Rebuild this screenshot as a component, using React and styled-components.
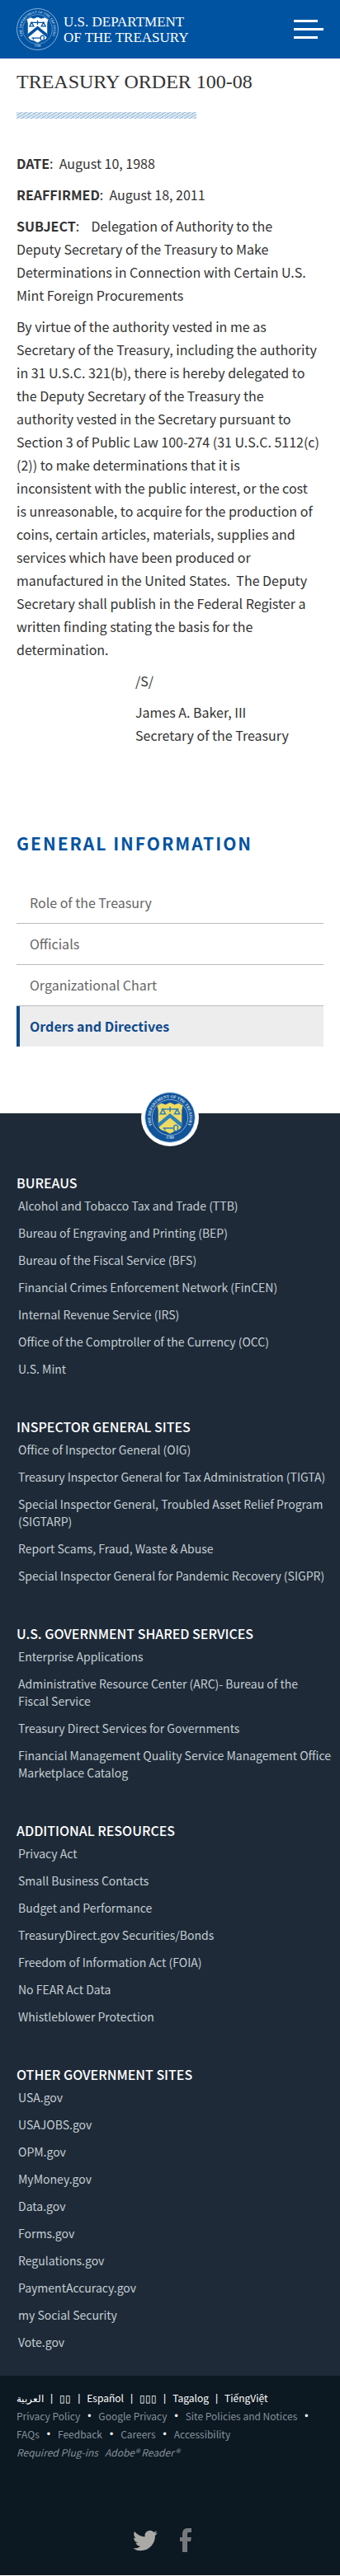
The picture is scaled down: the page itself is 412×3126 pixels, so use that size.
import React from "react";
import styled, { createGlobalStyle } from "styled-components";

const sans = `"Noto Sans CJK SC", "Liberation Sans", sans-serif`;
const serif = `"Liberation Serif", serif`;

const GlobalStyle = createGlobalStyle`
  *, *::before, *::after { box-sizing: border-box; }
  body { margin: 0; background: #fff; color: #333; font: 16px/28px ${sans}; }
  h1, h2, h3, p, ul { margin: 0; padding: 0; }
  ul { list-style: none; }
  a { color: inherit; text-decoration: none; }
`;

const Header = styled.header`
  display: flex;
  align-items: center;
  justify-content: space-between;
  height: 71px;
  padding: 0 20px;
  background: #0053a1;
  color: #fff;
`;

const Brand = styled.a`
  display: flex;
  align-items: center;
  gap: 6px;
  font: 17px/19px ${serif};
`;

const MenuButton = styled.button`
  display: flex;
  padding: 0;
  border: 0;
  background: none;
  color: #fff;
`;

const Main = styled.main`
  padding: 0 20px;
`;

const Title = styled.h1`
  padding-top: 12px;
  font: 400 24px/32px ${serif};
`;

const Stripe = styled.div`
  width: 218px;
  max-width: 100%;
  height: 8px;
  margin: 21px 0 40px;
  background: repeating-linear-gradient(150deg, #9dbdd9 0 1px, #dce9f3 1px 3px);
`;

const Article = styled.article`
  display: flex;
  flex-direction: column;
  gap: 10px;
`;

const Signature = styled.p`
  padding-left: 144px;
`;

const SideNav = styled.nav`
  margin: 103px 0 81px;
`;

const SideTitle = styled.h2`
  margin-bottom: 34px;
  color: #0053a1;
  font-size: 21px;
  line-height: 28px;
  letter-spacing: 2px;
  text-transform: uppercase;
`;

const SideItem = styled.li`
  & + & { border-top: 1px solid #b8bcbc; }
`;

const SideLink = styled.a`
  display: block;
  padding: 0 16px;
  color: ${(p) => (p.$active ? "#0f4a8a" : "#666")};
  font-weight: ${(p) => (p.$active ? 700 : 400)};
  line-height: 49px;
  ${(p) => p.$active && "padding-left: 12px; border-left: 4px solid #0f4a8a; background: #ededee;"}
`;

const Footer = styled.footer`
  background: #1e2a38;
  color: #c4cdd2;
`;

const FooterSeal = styled.div`
  display: flex;
  justify-content: center;
  height: 70px;
`;

const SealBadge = styled.div`
  position: relative;
  top: -30px;
  width: 70px;
  height: 70px;
  padding: 4px;
  border-radius: 50%;
  background: #fff;
`;

const FooterGroups = styled.div`
  display: flex;
  flex-direction: column;
  gap: 45px;
  padding: 0 10px 30px 20px;
`;

const GroupTitle = styled.h3`
  color: #fff;
  font-size: 16px;
  font-weight: 500;
  line-height: 28px;
  text-transform: uppercase;
`;

const LinkList = styled.ul`
  display: flex;
  flex-direction: column;
  gap: 12px;
  padding: 4px 0 0 2px;
  font-size: 14px;
  line-height: 21px;
`;

const Legal = styled.div`
  padding: 16px 20px 27px;
  background: #0c1822;
  color: #84909a;
  font-size: 12px;
  line-height: 22px;
`;

const Inline = styled.ul`
  display: flex;
  flex-wrap: wrap;
  color: ${(p) => (p.$bright ? "#fff" : "inherit")};
`;

const InlineItem = styled.li`
  display: flex;

  &:not(:last-child)::after {
    content: "${(p) => p.$mark}";
    padding: 0 ${(p) => (p.$mark === "|" ? 8 : 9)}px;
    color: #fff;
    font-family: "Liberation Sans", sans-serif;
  }
`;

const Plugins = styled.p`
  display: flex;
  gap: 8px;
  font-style: italic;
`;

const Social = styled.div`
  display: flex;
  justify-content: center;
  gap: 27px;
  margin-top: 81px;
  padding-right: 20px;
`;

const SocialLink = styled.a`
  display: flex;
  color: ${(p) => p.$tone};
`;

function Seal({ id, size, ring, field, shield, mark, line }) {
  return (
    <svg width={size} height={size} viewBox="0 0 100 100" role="img" aria-label="Treasury seal">
      <circle cx="50" cy="50" r="49" fill={ring} stroke={line} strokeWidth="1.5" />
      <circle cx="50" cy="50" r="35" fill={field} stroke={line} strokeWidth="1" />
      <path id={id} d="M20 73A38 38 0 1 1 80 73" fill="none" />
      <path id={id + "-year"} d="M25 84A43 43 0 0 0 75 84" fill="none" />
      <text fill={line} fontFamily="Liberation Serif" fontSize="8" fontWeight="700" textAnchor="middle">
        <textPath href={"#" + id} startOffset="50%">THE DEPARTMENT OF THE TREASURY</textPath>
        <textPath href={"#" + id + "-year"} startOffset="50%">1789</textPath>
      </text>
      <path d="M25 27l8-5 8 3 9-4 9 4 8-3 8 5-2 9v27c0 11-9 13-14 14l-9 5-9-5c-5-1-14-3-14-14V36z" fill={shield} />
      <path d="M27 61l23-19 23 19v9L50 51 27 70z" fill={mark} />
      <path d="M33 34h34M50 29v10M36 34l-5 9h10zM64 34l-5 9h10z" fill="none" stroke={mark} strokeWidth="2.5" />
      <path d="M36 71h22m0 0a4 4 0 1 1 7 0 4 4 0 1 1-7 0M40 71v4" fill="none" stroke={mark} strokeWidth="2.5" />
    </svg>
  );
}

const sideLinks = ["Role of the Treasury", "Officials", "Organizational Chart", "Orders and Directives"];

const groups = [
  ["Bureaus", ["Alcohol and Tobacco Tax and Trade (TTB)", "Bureau of Engraving and Printing (BEP)", "Bureau of the Fiscal Service (BFS)", "Financial Crimes Enforcement Network (FinCEN)", "Internal Revenue Service (IRS)", "Office of the Comptroller of the Currency (OCC)", "U.S. Mint"]],
  ["Inspector General Sites", ["Office of Inspector General (OIG)", "Treasury Inspector General for Tax Administration (TIGTA)", "Special Inspector General, Troubled Asset Relief Program (SIGTARP)", "Report Scams, Fraud, Waste & Abuse", "Special Inspector General for Pandemic Recovery (SIGPR)"]],
  ["U.S. Government Shared Services", ["Enterprise Applications", "Administrative Resource Center (ARC)- Bureau of the Fiscal\u00a0Service", "Treasury Direct Services for Governments", "Financial Management Quality Service Management Office Marketplace Catalog"]],
  ["Additional Resources", ["Privacy Act", "Small Business Contacts", "Budget and Performance", "TreasuryDirect.gov Securities/Bonds", "Freedom of Information Act (FOIA)", "No FEAR Act Data", "Whistleblower Protection"]],
  ["Other Government Sites", ["USA.gov", "USAJOBS.gov", "OPM.gov", "MyMoney.gov", "Data.gov", "Forms.gov", "Regulations.gov", "PaymentAccuracy.gov", "my Social Security", "Vote.gov"]],
];

const languages = ["العربية", "▯▯", "Español", "▯▯▯", "Tagalog", "TiếngViệt"];
const policies = ["Privacy Policy", "Google Privacy", "Site Policies and Notices", "FAQs", "Feedback", "Careers", "Accessibility"];

export default function App() {
  return (
    <>
      <GlobalStyle />
      <Header>
        <Brand href="#">
          <Seal id="head-seal" size={51} ring="#0053a1" field="#0053a1" shield="#fff" mark="#0053a1" line="#b5d2ea" />
          <span>U.S. DEPARTMENT<br />OF THE TREASURY</span>
        </Brand>
        <MenuButton aria-label="Menu">
          <svg width="36" height="24" viewBox="0 0 36 24" fill="currentColor">
            <path d="M0 0h29v3H0zM0 10h36v3H0zM0 20h29v3H0z" />
          </svg>
        </MenuButton>
      </Header>
      <Main>
        <Title>TREASURY ORDER 100-08</Title>
        <Stripe />
        <Article>
          <p><strong>DATE</strong>:&nbsp; August 10, 1988</p>
          <p><strong>REAFFIRMED</strong>:&nbsp; August 18, 2011</p>
          <p><strong>SUBJECT</strong>:&nbsp;&nbsp;&nbsp; Delegation of Authority to the Deputy&nbsp;Secretary of the Treasury to Make Determinations&nbsp;in Connection with Certain U.S. Mint Foreign Procurements</p>
          <p>By virtue of the authority vested in me as Secretary of the Treasury, including the authority in 31 U.S.C. 321(b), there is hereby delegated to the Deputy Secretary of the Treasury the authority vested in the Secretary pursuant to Section 3 of Public Law 100-274 (31 U.S.C. 5112(c)(2)) to make determinations that it is inconsistent&nbsp;with the public interest, or the cost is&nbsp;unreasonable, to acquire for the production of coins, certain articles, materials, supplies and services which have been produced or manufactured in the United States.&nbsp; The Deputy Secretary shall publish in the Federal Register a written finding stating the basis for the determination.</p>
          <Signature>/S/</Signature>
          <Signature>James A. Baker, III<br />Secretary of the Treasury</Signature>
        </Article>
        <SideNav aria-labelledby="side-title">
          <SideTitle id="side-title">General Information</SideTitle>
          <ul>
            {sideLinks.map((t, i) => (
              <SideItem key={t}><SideLink href="#" $active={i === 3}>{t}</SideLink></SideItem>
            ))}
          </ul>
        </SideNav>
      </Main>
      <Footer>
        <FooterSeal>
          <SealBadge>
            <Seal id="foot-seal" size={62} ring="#12549a" field="#12549a" shield="#f0db62" mark="#2f80b8" line="#cfe2ef" />
          </SealBadge>
        </FooterSeal>
        <FooterGroups>
          {groups.map(([title, links]) => (
            <section key={title}>
              <GroupTitle>{title}</GroupTitle>
              <LinkList>{links.map((t) => <li key={t}><a href="#">{t}</a></li>)}</LinkList>
            </section>
          ))}
        </FooterGroups>
        <Legal>
          <Inline $bright>
            {languages.map((t, i) => <InlineItem key={i} $mark="|"><a href="#">{t}</a></InlineItem>)}
          </Inline>
          <Inline>
            {policies.map((t) => <InlineItem key={t} $mark="•"><a href="#">{t}</a></InlineItem>)}
          </Inline>
          <Plugins><span>Required Plug-ins</span><a href="#">Adobe® Reader®</a></Plugins>
          <Social>
            <SocialLink href="#" aria-label="Twitter" $tone="#aaa9a6">
              <svg width="30" height="30" viewBox="0 0 24 24" fill="currentColor">
                <path d="M23.95 4.57a10 10 0 0 1-2.82.77 4.96 4.96 0 0 0 2.16-2.72c-.95.55-2 .95-3.13 1.18a4.92 4.92 0 0 0-8.38 4.48C7.69 8.1 4.07 6.13 1.64 3.16a4.92 4.92 0 0 0 1.52 6.57 4.9 4.9 0 0 1-2.23-.61v.06a4.92 4.92 0 0 0 3.95 4.83 5 5 0 0 1-2.21.08 4.94 4.94 0 0 0 4.6 3.42A9.87 9.87 0 0 1 0 19.54a14 14 0 0 0 7.55 2.21c9.05 0 14-7.5 14-13.98 0-.21 0-.42-.02-.63a9.94 9.94 0 0 0 2.42-2.57z" />
              </svg>
            </SocialLink>
            <SocialLink href="#" aria-label="Facebook" $tone="#75797c">
              <svg width="14" height="30" viewBox="0 0 14 30" fill="currentColor">
                <path d="M3 29V16H0v-5h3V7c0-4 2-7 6-7h5v5h-3c-2 0-2 1-2 2v4h5l-1 5H9v13z" />
              </svg>
            </SocialLink>
          </Social>
        </Legal>
      </Footer>
    </>
  );
}
